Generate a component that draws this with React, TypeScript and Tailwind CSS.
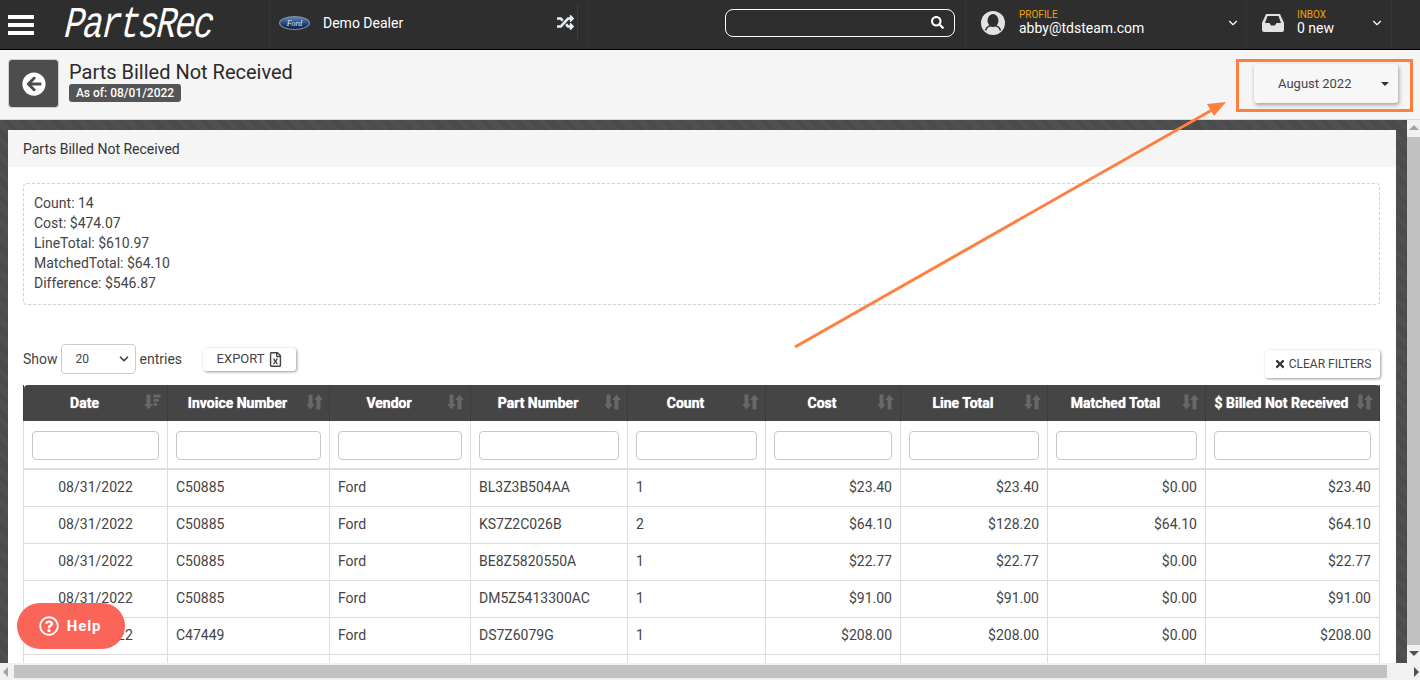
import React from 'react';
import {
  FaRandom,
  FaSearch,
  FaArrowCircleLeft,
  FaTimes,
  FaRegQuestionCircle,
  FaRegFileExcel,
} from 'react-icons/fa';
import { FiChevronDown } from 'react-icons/fi';

const COLUMNS = [
  { name: 'Date', width: 144, sorted: true },
  { name: 'Invoice Number', width: 162 },
  { name: 'Vendor', width: 141 },
  { name: 'Part Number', width: 157 },
  { name: 'Count', width: 138 },
  { name: 'Cost', width: 135 },
  { name: 'Line Total', width: 147 },
  { name: 'Matched Total', width: 158 },
  { name: '$ Billed Not Received', width: 174 },
];

const ROWS = [
  ['08/31/2022', 'C50885', 'Ford', 'BL3Z3B504AA', '1', '$23.40', '$23.40', '$0.00', '$23.40'],
  ['08/31/2022', 'C50885', 'Ford', 'KS7Z2C026B', '2', '$64.10', '$128.20', '$64.10', '$64.10'],
  ['08/31/2022', 'C50885', 'Ford', 'BE8Z5820550A', '1', '$22.77', '$22.77', '$0.00', '$22.77'],
  ['08/31/2022', 'C50885', 'Ford', 'DM5Z5413300AC', '1', '$91.00', '$91.00', '$0.00', '$91.00'],
  ['08/31/2022', 'C47449', 'Ford', 'DS7Z6079G', '1', '$208.00', '$208.00', '$0.00', '$208.00'],
  ['', '', '', '', '', '', '', '', ''],
];

function SortIcon({ sorted }: { sorted?: boolean }) {
  return (
    <svg width="17" height="16" viewBox="0 0 17 16" fill="#686868">
      <path d="M2.500 0.500h4v9.500h2.300L4.500 15.500.2 10h2.300z" />
      {sorted ? (
        <path d="M9.500 0.500h7v3h-7zM9.500 4.700h5.500v3h-5.500zM9.500 8.900h3.500v3h-3.500z" />
      ) : (
        <path d="M10.500 15.500h4V6h2.300L12.500.5 8.200 6h2.300z" />
      )}
    </svg>
  );
}

function FordLogo() {
  return (
    <svg width="31" height="14" viewBox="0 0 31 14">
      <defs>
        <linearGradient id="fordBlue" x1="0" y1="0" x2="0" y2="1">
          <stop offset="0" stopColor="#5f86c0" />
          <stop offset="0.55" stopColor="#23457f" />
          <stop offset="1" stopColor="#101f3f" />
        </linearGradient>
      </defs>
      <ellipse cx="15.500" cy="7" rx="15.500" ry="7" fill="#7f8fa3" />
      <ellipse cx="15.500" cy="7" rx="14.300" ry="5.900" fill="url(#fordBlue)" />
      <text x="15.500" y="9.500" textAnchor="middle" fontSize="8" fontStyle="italic" fontFamily="'Liberation Serif', serif" fill="#dfe6ef">
        Ford
      </text>
    </svg>
  );
}

function HamburgerIcon() {
  return (
    <svg width="26" height="20" viewBox="0 0 26 20" fill="#ffffff">
      <rect y="0" width="26" height="4" />
      <rect y="8" width="26" height="4" />
      <rect y="16" width="26" height="4" />
    </svg>
  );
}

function UserIcon() {
  return (
    <svg width="24" height="24" viewBox="0 0 24 24">
      <circle cx="12" cy="12" r="12" fill="#e2e2e2" />
      <ellipse cx="12" cy="9.500" rx="5.500" ry="6.500" fill="#2e2e2e" />
      <path d="M4.500 19.500c1-4 4-5 7.500-5s6.500 1 7.500 5" stroke="#2e2e2e" strokeWidth="1.500" fill="none" />
    </svg>
  );
}

function InboxIcon() {
  return (
    <svg width="22" height="18" viewBox="0 0 22 18">
      <path d="M4 0h14l4 9v7a2 2 0 0 1-2 2H2a2 2 0 0 1-2-2V9z" fill="#e2e2e2" />
      <path d="M5.500 2h11l2.500 7h-4.500l-1.500 2.500h-4L7.500 9H3z" fill="#2e2e2e" />
    </svg>
  );
}

function TopBar() {
  return (
    <header className="flex h-[50px] shrink-0 border-b border-black bg-[#2e2e2e] text-white">
      <div className="flex w-[269px] items-center">
        <div className="ml-2 flex">
          <HamburgerIcon />
        </div>
        <span className="ml-[31px] -skew-x-6 scale-y-[1.3] font-['Liberation_Mono',monospace] text-[34px] leading-none italic tracking-[-2px]">
          PartsRec
        </span>
      </div>
      <div className="flex w-[320px] items-center border-x border-[#35353f] pb-1 pr-[10px]">
        <div className="ml-[9px] flex">
          <FordLogo />
        </div>
        <span className="ml-[13px] text-sm">Demo Dealer</span>
        <div className="ml-auto flex h-[38px] items-center border-r border-[#3a3a44] pr-[3px]">
          <FaRandom className="text-[17px] text-[#e6eef5]" />
        </div>
      </div>
      <div className="flex w-[376px] items-center justify-end pb-1 pr-[10px]">
        <div className="flex h-[28px] w-[230px] items-center justify-end rounded-lg border border-white pr-[10px]">
          <FaSearch className="text-[13px]" />
        </div>
      </div>
      <div className="flex w-[281px] items-center border-l border-[#35353f] pb-1 pl-[15px]">
        <UserIcon />
        <div className="ml-[14px] leading-none">
          <div className="text-[10px] leading-[11px] text-[#f0a30a]">PROFILE</div>
          <div className="text-sm leading-[17px]">abby@tdsteam.com</div>
        </div>
        <FiChevronDown className="ml-auto mr-[6px] text-[14px]" />
      </div>
      <div className="flex w-[146px] items-center border-x border-[#35353f] pb-1 pl-[15px]">
        <InboxIcon />
        <div className="ml-[13px] leading-none">
          <div className="text-[10px] leading-[11px] text-[#f0a30a]">INBOX</div>
          <div className="text-sm leading-[17px]">0 new</div>
        </div>
        <FiChevronDown className="ml-auto mr-[7px] text-[14px]" />
      </div>
    </header>
  );
}

function PageTitle() {
  return (
    <div className="flex h-[70px] shrink-0 items-start border-b border-[#d8d8d8] bg-[#f5f5f5] pl-2 pr-[22px]">
      <button className="mt-[9px] flex h-[49px] w-[51px] items-center justify-center rounded-sm border border-[#cfcfcf] bg-[#4d4d4d]">
        <FaArrowCircleLeft className="text-[24px] text-white" />
      </button>
      <div className="ml-[10px] mt-[10px]">
        <h1 className="text-xl leading-[24px] text-[#2a2a2a]">Parts Billed Not Received</h1>
        <span className="block w-[112px] rounded-[3px] bg-[#555555] text-center text-xs font-medium leading-[18px] text-white">
          As of: 08/01/2022
        </span>
      </div>
      <button className="ml-auto mt-[14px] flex h-[39px] w-[144px] items-center rounded-[3px] bg-[#f7f7f7] pl-6 pr-[9px] text-[13px] text-[#444444] shadow-[1px_2px_4px_rgba(0,0,0,0.35)]">
        August 2022
        <span className="ml-auto h-0 w-0 border-x-[4px] border-t-[4px] border-x-transparent border-t-[#333333]" />
      </button>
    </div>
  );
}

function SummaryBox() {
  return (
    <div className="rounded border border-dashed border-[#d0d0d0] px-[10px] pb-[11px] pt-[9px] text-sm leading-5 text-[#444444]">
      <div>Count: 14</div>
      <div>Cost: $474.07</div>
      <div>LineTotal: $610.97</div>
      <div>MatchedTotal: $64.10</div>
      <div>Difference: $546.87</div>
    </div>
  );
}

function Toolbar() {
  return (
    <div className="flex h-[80px] items-end justify-between pb-[7px]">
      <div className="mb-[4px] flex items-center text-sm text-[#444444]">
        <span>Show</span>
        <div className="ml-[3px] mr-[4px] flex h-[30px] w-[75px] items-center justify-between rounded border border-[#cccccc] pl-[14px] pr-[4px] text-xs">
          20
          <FiChevronDown className="text-[14px] [stroke-width:3]" />
        </div>
        <span>entries</span>
        <button className="ml-[21px] mt-px flex h-[23px] w-[93px] items-center justify-center gap-[3px] rounded-[3px] bg-white text-[13px] text-[#444444] shadow-[1px_1px_3px_rgba(0,0,0,0.4)]">
          EXPORT
          <FaRegFileExcel className="text-[15px]" />
        </button>
      </div>
      <button className="flex h-[28px] w-[115px] items-center justify-center gap-[3px] rounded-[3px] bg-white text-xs text-[#444444] shadow-[1px_1px_3px_rgba(0,0,0,0.4)]">
        <FaTimes className="text-[12px] text-[#333333]" />
        CLEAR FILTERS
      </button>
    </div>
  );
}

function DataTable() {
  return (
    <table className="w-[1356px] table-fixed border-collapse text-sm text-[#444444]">
      <colgroup>
        {COLUMNS.map((col) => (
          <col key={col.name} style={{ width: col.width }} />
        ))}
      </colgroup>
      <thead>
        <tr className="h-[36px] bg-[#454545] text-white">
          {COLUMNS.map((col) => (
            <th key={col.name} className="border-x border-[#3b3b48] p-0 font-bold first:rounded-tl last:rounded-tr">
              <div className="relative pl-2 pr-[30px] text-center [text-shadow:0_0_1px_#ffffff]">
                {col.name}
                <span className="absolute right-[6px] top-[1px]">
                  <SortIcon sorted={col.sorted} />
                </span>
              </div>
            </th>
          ))}
        </tr>
        <tr className="h-[47px] border-b-2 border-[#dddddd]">
          {COLUMNS.map((col) => (
            <th key={col.name} className="border-x border-[#dddddd] px-2 pb-[8px] pt-[10px]">
              <div className="h-[29px] rounded border border-[#c8c8c8] bg-white" />
            </th>
          ))}
        </tr>
      </thead>
      <tbody>
        {ROWS.map((row, i) => (
          <tr key={i} className="h-[37px] border-b border-[#dddddd]">
            {row.map((cell, j) => (
              <td
                key={j}
                className={
                  j === 0
                    ? 'border-x border-[#dddddd] px-2 pb-px text-center'
                    : j >= 5
                      ? 'border-x border-[#dddddd] px-2 pb-px text-right'
                      : 'border-x border-[#dddddd] px-2 pb-px text-left'
                }
              >
                {cell}
              </td>
            ))}
          </tr>
        ))}
      </tbody>
    </table>
  );
}

function VerticalScrollbar() {
  return (
    <div className="flex w-[13px] shrink-0 flex-col items-center bg-[#f1f1f1]">
      <div className="mt-[5px] h-0 w-0 border-x-[5px] border-b-[5px] border-x-transparent border-b-[#a3a3a3]" />
      <div className="mt-[7px] h-[508px] w-full bg-[#c1c1c1]" />
      <div className="mt-[6px] h-0 w-0 border-x-[5px] border-t-[5px] border-x-transparent border-t-[#505050]" />
    </div>
  );
}

function HorizontalScrollbar() {
  return (
    <div className="flex h-[17px] shrink-0 items-center bg-[#f1f1f1]">
      <div className="ml-[3px] h-0 w-0 border-y-[5px] border-r-[5px] border-y-transparent border-r-[#a3a3a3]" />
      <div className="ml-[6px] h-[13px] w-[1373px] bg-[#c1c1c1]" />
      <div className="ml-[27px] h-0 w-0 border-y-[5px] border-l-[5px] border-y-transparent border-l-[#505050]" />
    </div>
  );
}

export default function App() {
  return (
    <div className="relative flex h-[680px] w-[1420px] flex-col overflow-hidden font-['Roboto',sans-serif]">
      <TopBar />
      <PageTitle />
      <div className="flex min-h-0 flex-1">
        <main className="min-w-0 flex-1 overflow-hidden bg-[#4c4c4c] bg-[repeating-linear-gradient(45deg,#474747_0,#474747_1px,#545454_1px,#545454_2px)] pl-2 pt-[10px]">
          <section className="w-[1388px] bg-white">
            <div className="flex h-[37px] items-center bg-[#f5f5f5] px-[15px] text-sm text-[#333333]">
              Parts Billed Not Received
            </div>
            <div className="pl-[15px] pr-4 pt-4">
              <SummaryBox />
              <Toolbar />
              <DataTable />
            </div>
          </section>
        </main>
        <VerticalScrollbar />
      </div>
      <HorizontalScrollbar />

      {/* orange annotation over the screenshot */}
      <div className="pointer-events-none absolute left-[1236px] top-[59px] h-[53px] w-[177px] border-[3px] border-[#ff7f41]" />
      <svg className="pointer-events-none absolute inset-0" width="1420" height="680">
        <line x1="795" y1="347" x2="1212" y2="110" stroke="#ff7f41" strokeWidth="3" />
        <polygon points="1226,102 1214,116 1207,104" fill="#ff7f41" />
      </svg>

      <button className="absolute left-[17px] top-[603px] flex h-[46px] w-[108px] items-center justify-center gap-[8px] rounded-full bg-[#fb6458] pr-[2px] text-[15px] font-bold tracking-[0.8px] text-white">
        <FaRegQuestionCircle className="text-[20px]" />
        Help
      </button>
    </div>
  );
}
